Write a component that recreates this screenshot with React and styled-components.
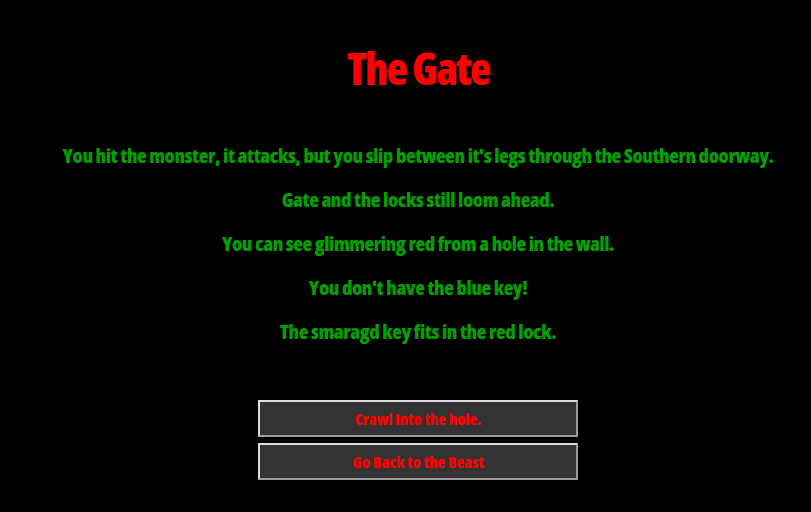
import React from "react";
import styled, { createGlobalStyle } from "styled-components";

const GlobalStyle = createGlobalStyle`
  html, body {
    margin: 0;
    padding: 0;
    background-color: #000;
  }
`;

const S = {
  Wrap: styled.div`
    min-height: 512px;
    padding: 44px 0 0 25px;
    box-sizing: border-box;
    display: flex;
    flex-direction: column;
    align-items: center;
    font-family: "Open Sans", "Liberation Sans", sans-serif;
    font-weight: 800;
    font-stretch: 75%;
  `,
  Title: styled.h1`
    margin: 0;
    color: #ff0000;
    font-size: 44px;
    font-weight: 800;
    font-stretch: 78%;
    line-height: 48px;
    letter-spacing: -1.8px;
  `,
  Story: styled.div`
    margin-top: 52px;
    display: flex;
    flex-direction: column;
    align-items: center;
    gap: 20px;
    p {
      margin: 0;
      color: #00a000;
      font-size: 20px;
      line-height: 24px;
      letter-spacing: -0.45px;
      white-space: nowrap;
    }
  `,
  Choices: styled.div`
    margin-top: 56px;
    display: flex;
    flex-direction: column;
    gap: 6px;
  `,
  Choice: styled.button`
    width: 320px;
    height: 37px;
    padding: 0;
    background-color: #333;
    border: 2px solid;
    border-color: #dcdcdc #9a9a9a #9a9a9a #dcdcdc;
    color: #ff0000;
    font-family: inherit;
    font-weight: 800;
    font-stretch: 75%;
    font-size: 16px;
    letter-spacing: -0.1px;
    cursor: pointer;
  `,
};

const lines = [
  "You hit the monster, it attacks, but you slip between it's legs through the Southern doorway.",
  "Gate and the locks still loom ahead.",
  "You can see glimmering red from a hole in the wall.",
  "You don't have the blue key!",
  "The smaragd key fits in the red lock.",
];

function App() {
  return (
    <S.Wrap>
      <GlobalStyle />
      <S.Title>The Gate</S.Title>
      <S.Story>
        {lines.map((line) => (
          <p key={line}>{line}</p>
        ))}
      </S.Story>
      <S.Choices>
        <S.Choice>Crawl Into the hole.</S.Choice>
        <S.Choice>Go Back to the Beast</S.Choice>
      </S.Choices>
    </S.Wrap>
  );
}

export default App;
